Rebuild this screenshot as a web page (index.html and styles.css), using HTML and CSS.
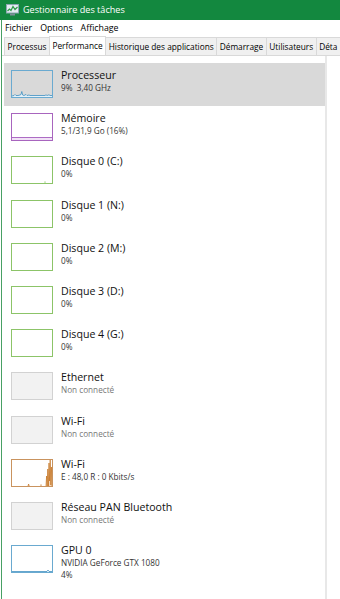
FILE: index.html
```html
<!DOCTYPE html>
<html lang="fr">
<head>
<meta charset="utf-8">
<title>Gestionnaire des tâches</title>
<link rel="stylesheet" href="styles.css">
</head>
<body>
<div class="titlebar">
  <svg class="appicon" width="13" height="12" viewBox="0 0 13 12">
    <rect x="0.5" y="0.5" width="12" height="8.5" fill="#e4edf2" stroke="#8ea6b3"/>
    <polyline points="1.5,7 3.5,5 5,6.5 7,2.5 9,5.5 11.5,3" fill="none" stroke="#2f9a48" stroke-width="1.2"/>
    <rect x="4" y="9.5" width="5" height="2" fill="#7d8e98"/>
  </svg>
  <span class="title">Gestionnaire des tâches</span>
</div>
<div class="main">
  <div class="menu">
    <span class="mi">Fichier</span>
    <span class="mi">Options</span>
    <span class="mi">Affichage</span>
  </div>
  <div class="tabs">
    <div class="tab">Processus</div>
    <div class="tab active">Performance</div>
    <div class="tab">Historique des applications</div>
    <div class="tab">Démarrage</div>
    <div class="tab">Utilisateurs</div>
    <div class="tab">Déta</div>
  </div>
  <div class="content">
    <div class="list">
      <div class="row sel">
        <svg class="graph" viewBox="0 0 42 28">
          <polygon points="1,26 3,25.5 4,24.5 5,25.5 7,25.5 9,25 10,24.5 10.8,21.5 11.6,25 13,25.5 15,24.5 16,25.5 18,25 19,25.5 22,25.5 26,25.5 30,25.5 34,25.5 35,24.8 36,25.5 38,24.8 39,25.5 41,25.5 41,27 1,27" fill="#e6f1f8" stroke="none"/>
          <polyline points="1,26 3,25.5 4,24.5 5,25.5 7,25.5 9,25 10,24.5 10.8,21.5 11.6,25 13,25.5 15,24.5 16,25.5 18,25 19,25.5 22,25.5 26,25.5 30,25.5 34,25.5 35,24.8 36,25.5 38,24.8 39,25.5 41,25.5" fill="none" stroke="#3d8fc2" stroke-width="0.8"/>
          <rect x="0.5" y="0.5" width="41" height="27" fill="none" stroke="#6aaad0"/>
        </svg>
        <div class="info">
          <div class="name">Processeur</div>
          <div class="val">9%&nbsp; 3,40 GHz</div>
        </div>
      </div>
      <div class="row">
        <svg class="graph" viewBox="0 0 42 28">
          <rect x="0.5" y="0.5" width="41" height="27" fill="#fff"/>
          <rect x="1" y="24.5" width="40" height="3" fill="#f1e2f6"/>
          <line x1="1" y1="24.5" x2="41" y2="24.5" stroke="#a45cbd" stroke-width="0.9"/>
          <rect x="0.5" y="0.5" width="41" height="27" fill="none" stroke="#a865be"/>
        </svg>
        <div class="info">
          <div class="name">Mémoire</div>
          <div class="val">5,1/31,9 Go (16%)</div>
        </div>
      </div>
      <div class="row">
        <svg class="graph" viewBox="0 0 42 28">
          <rect x="0.5" y="0.5" width="41" height="27" fill="#fff" stroke="#8cc468"/>
          <line x1="34" y1="27" x2="34" y2="25.3" stroke="#8cc468" stroke-width="0.8"/>
        </svg>
        <div class="info">
          <div class="name">Disque 0 (C:)</div>
          <div class="val">0%</div>
        </div>
      </div>
      <div class="row">
        <svg class="graph" viewBox="0 0 42 28">
          <rect x="0.5" y="0.5" width="41" height="27" fill="#fff" stroke="#8cc468"/>
        </svg>
        <div class="info">
          <div class="name">Disque 1 (N:)</div>
          <div class="val">0%</div>
        </div>
      </div>
      <div class="row">
        <svg class="graph" viewBox="0 0 42 28">
          <rect x="0.5" y="0.5" width="41" height="27" fill="#fff" stroke="#8cc468"/>
        </svg>
        <div class="info">
          <div class="name">Disque 2 (M:)</div>
          <div class="val">0%</div>
        </div>
      </div>
      <div class="row">
        <svg class="graph" viewBox="0 0 42 28">
          <rect x="0.5" y="0.5" width="41" height="27" fill="#fff" stroke="#8cc468"/>
        </svg>
        <div class="info">
          <div class="name">Disque 3 (D:)</div>
          <div class="val">0%</div>
        </div>
      </div>
      <div class="row">
        <svg class="graph" viewBox="0 0 42 28">
          <rect x="0.5" y="0.5" width="41" height="27" fill="#fff" stroke="#8cc468"/>
        </svg>
        <div class="info">
          <div class="name">Disque 4 (G:)</div>
          <div class="val">0%</div>
        </div>
      </div>
      <div class="row">
        <svg class="graph" viewBox="0 0 42 28">
          <rect x="0.5" y="0.5" width="41" height="27" fill="#f2f2f2" stroke="#d2d2d2"/>
        </svg>
        <div class="info">
          <div class="name">Ethernet</div>
          <div class="val off">Non connecté</div>
        </div>
      </div>
      <div class="row">
        <svg class="graph" viewBox="0 0 42 28">
          <rect x="0.5" y="0.5" width="41" height="27" fill="#f2f2f2" stroke="#d2d2d2"/>
        </svg>
        <div class="info">
          <div class="name">Wi-Fi</div>
          <div class="val off">Non connecté</div>
        </div>
      </div>
      <div class="row">
        <svg class="graph" viewBox="0 0 42 28">
          <rect x="0.5" y="0.5" width="41" height="27" fill="#fff"/>
          <polygon points="1,27 17,27 17.6,25 18.2,27 29.5,27 30,25.5 30.5,27 35,27 35.6,17 36.2,27 36.8,10 37.4,27 38,4 38.6,22 39.2,1 39.8,26 40.4,8 41,27" fill="#f3d7bd" stroke="none"/>
          <polyline points="17,27 17.6,25 18.2,27" fill="none" stroke="#c4731f" stroke-width="0.7"/>
          <polyline points="35,27 35.6,17 36.2,27 36.8,10 37.4,27 38,4 38.6,22 39.2,1 39.8,26 40.4,8 41,27" fill="none" stroke="#c4731f" stroke-width="0.7"/>
          <line x1="30" y1="27" x2="30" y2="25.3" stroke="#c4731f" stroke-width="0.7"/>
          <rect x="0.5" y="0.5" width="41" height="27" fill="none" stroke="#c9935e"/>
        </svg>
        <div class="info">
          <div class="name">Wi-Fi</div>
          <div class="val">E : 48,0 R : 0 Kbits/s</div>
        </div>
      </div>
      <div class="row">
        <svg class="graph" viewBox="0 0 42 28">
          <rect x="0.5" y="0.5" width="41" height="27" fill="#f2f2f2" stroke="#d2d2d2"/>
        </svg>
        <div class="info">
          <div class="name">Réseau PAN Bluetooth</div>
          <div class="val off">Non connecté</div>
        </div>
      </div>
      <div class="row">
        <svg class="graph" viewBox="0 0 42 28">
          <rect x="0.5" y="0.5" width="41" height="27" fill="#fff"/>
          <polyline points="1,26.5 36,26.5 37,25 38,26.5 41,26.5" fill="none" stroke="#3d8fc2" stroke-width="0.8"/>
          <rect x="0.5" y="0.5" width="41" height="27" fill="none" stroke="#6aaad0"/>
        </svg>
        <div class="info">
          <div class="name">GPU 0</div>
          <div class="val">NVIDIA GeForce GTX 1080</div>
          <div class="val">4%</div>
        </div>
      </div>
    </div>
    <div class="sep"></div>
  </div>
</div>
</body>
</html>
```

FILE: styles.css
```css
html, body {
  margin: 0;
  padding: 0;
}
body {
  width: 340px;
  height: 599px;
  overflow: hidden;
  background: #fff;
  font-family: "Open Sans", "Noto Sans", sans-serif;
  color: #111;
}
.titlebar {
  height: 20px;
  background: #13883f;
  display: flex;
  align-items: center;
  padding-left: 6px;
  gap: 4px;
  color: #fff;
  font-size: 9.1px;
  box-sizing: border-box;
}
.appicon {
  flex: none;
  display: block;
}
.title {
  line-height: 12px;
}
.main {
  margin-left: 1px;
  border-left: 1px solid #47a064;
  height: 579px;
  display: flex;
  flex-direction: column;
}
.menu {
  height: 16px;
  display: flex;
  align-items: center;
  padding-left: 3px;
  font-size: 8.8px;
  gap: 8px;
  color: #000;
}
.tabs {
  height: 20px;
  display: flex;
  align-items: flex-end;
  padding-left: 2px;
  border-bottom: 1px solid #d9d9d9;
  box-sizing: border-box;
  flex: none;
  overflow: hidden;
}
.tab {
  height: 18px;
  box-sizing: border-box;
  background: #f0f0f0;
  border: 1px solid #d9d9d9;
  border-bottom: none;
  margin-left: -1px;
  padding: 0 2.5px;
  font-size: 8.3px;
  display: flex;
  align-items: center;
  white-space: nowrap;
  color: #000;
  flex: none;
}
.tab:first-child {
  margin-left: 0;
}
.tab.active {
  background: #fff;
  height: 20px;
  margin-bottom: -1px;
  position: relative;
  z-index: 1;
  padding-bottom: 2px;
}
.content {
  flex: 1;
  display: flex;
}
.list {
  width: 321px;
  margin-left: 2px;
  padding-top: 7px;
  flex: none;
}
.sep {
  width: 2px;
  background: #e8e8e8;
  flex: none;
}
.row {
  height: 43.2px;
  box-sizing: border-box;
  padding: 7px 0 0 7px;
  display: flex;
  align-items: flex-start;
}
.row.sel {
  background: #d9d9d9;
}
.graph {
  width: 42px;
  height: 28px;
  flex: none;
  display: block;
}
.info {
  margin-left: 8px;
  margin-top: -2px;
}
.name {
  font-size: 10.6px;
  line-height: 14px;
  color: #111;
  white-space: nowrap;
}
.val {
  font-size: 8.2px;
  line-height: 12px;
  color: #333;
  white-space: nowrap;
}
.val.off {
  color: #777;
}
```
